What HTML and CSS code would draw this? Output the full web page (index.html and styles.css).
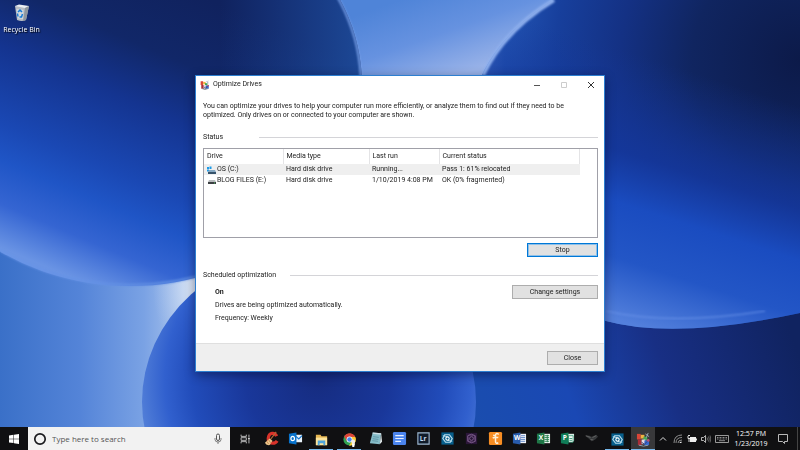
FILE: index.html
```html
<!DOCTYPE html>
<html lang="en">
<head>
<meta charset="utf-8">
<meta name="viewport" content="width=device-width, initial-scale=1">
<title>Optimize Drives</title>
<link rel="stylesheet" href="styles.css">
</head>
<body>
<svg class="wallpaper" viewBox="0 0 800 450" preserveAspectRatio="none" aria-hidden="true">
  <defs>
    <linearGradient id="sky" x1="0" y1="0" x2="1" y2="0">
      <stop offset="0" stop-color="#3a70c8"/><stop offset=".1" stop-color="#5484d8"/><stop offset=".18" stop-color="#7aa2e4"/><stop offset=".24" stop-color="#b4cbee"/><stop offset=".42" stop-color="#4a80d4"/><stop offset=".6" stop-color="#6a94e2"/><stop offset="1" stop-color="#14286b"/>
    </linearGradient>
    <linearGradient id="top" gradientUnits="userSpaceOnUse" x1="400" y1="0" x2="430" y2="85">
      <stop offset="0" stop-color="#4f84d8"/><stop offset=".5" stop-color="#6692e0"/><stop offset="1" stop-color="#98b2e8"/>
    </linearGradient>
    <radialGradient id="glow"><stop offset="0" stop-color="#e4ecf8"/><stop offset="1" stop-color="#b4cbee" stop-opacity="0"/></radialGradient>
    <linearGradient id="orbA" gradientUnits="userSpaceOnUse" x1="210" y1="0" x2="90" y2="285">
      <stop offset="0" stop-color="#10225e"/><stop offset=".22" stop-color="#112768"/><stop offset=".4" stop-color="#143490"/><stop offset=".63" stop-color="#1a48b4"/><stop offset=".74" stop-color="#1f55c6"/><stop offset=".87" stop-color="#3565d2"/><stop offset="1" stop-color="#6a94e4"/>
    </linearGradient>
    <linearGradient id="orbAEdge" gradientUnits="userSpaceOnUse" x1="220" y1="0" x2="362" y2="0">
      <stop offset="0" stop-color="#1d4da6" stop-opacity="0"/><stop offset="1" stop-color="#2052a4" stop-opacity=".8"/>
    </linearGradient>
    <linearGradient id="rimA" x1="0" y1="0" x2="1" y2="0"><stop offset="0" stop-color="#6f9aec"/><stop offset=".7" stop-color="#5c8be0"/><stop offset="1" stop-color="#7ba2ea"/></linearGradient>
    <radialGradient id="orbB" gradientUnits="userSpaceOnUse" cx="800" cy="60" r="360">
      <stop offset="0" stop-color="#0c1a49"/><stop offset=".3" stop-color="#102560"/><stop offset=".5" stop-color="#143184"/><stop offset=".68" stop-color="#173f9c"/><stop offset=".82" stop-color="#2254b4"/><stop offset=".9" stop-color="#4a7bd0"/><stop offset="1" stop-color="#6a95e2"/>
    </radialGradient>
    <linearGradient id="orbBLow" gradientUnits="userSpaceOnUse" x1="740" y1="50" x2="650" y2="330">
      <stop offset=".12" stop-color="#143596" stop-opacity="0"/><stop offset=".45" stop-color="#14379c" stop-opacity=".85"/><stop offset=".62" stop-color="#1a4cc0"/><stop offset=".8" stop-color="#2356c6"/><stop offset="1" stop-color="#5380dc"/>
    </linearGradient>
    <radialGradient id="orbC" gradientUnits="userSpaceOnUse" cx="318" cy="380" r="180">
      <stop offset="0" stop-color="#162c80"/><stop offset=".4" stop-color="#19379a"/><stop offset=".7" stop-color="#214cba"/><stop offset=".85" stop-color="#3160ce"/><stop offset="1" stop-color="#527fd8"/>
    </radialGradient>
    <linearGradient id="ground" gradientUnits="userSpaceOnUse" x1="480" y1="440" x2="790" y2="330">
      <stop offset="0" stop-color="#1a4dae"/><stop offset=".3" stop-color="#1a48b4"/><stop offset=".6" stop-color="#182f84"/><stop offset="1" stop-color="#102360"/>
    </linearGradient>
    <filter id="soft"><feGaussianBlur stdDeviation="1"/></filter>
  </defs>
  <rect width="800" height="450" fill="url(#sky)"/>
  <path d="M300 0h280v180H300z" fill="url(#top)"/>
  <ellipse cx="197" cy="288" rx="44" ry="70" fill="url(#glow)"/>
  <path d="M420 300h380v150H420z" fill="url(#ground)"/>
  <ellipse cx="130" cy="85" rx="232" ry="201" fill="url(#orbA)"/>
  <ellipse cx="130" cy="85" rx="232" ry="201" fill="url(#orbAEdge)"/>
  <ellipse cx="130" cy="85" rx="231" ry="200" fill="none" stroke="url(#rimA)" stroke-width="2" filter="url(#soft)"/>
  <path d="M553 0C520 20 496 45 482 75C440 170 470 290 606 321Q675 340 800 313V0Z" fill="url(#orbB)"/>
  <path d="M553 0C520 20 496 45 482 75C440 170 470 290 606 321Q675 340 800 313V0Z" fill="url(#orbBLow)"/>
  <path d="M554 0C521 20 497 45 483 75" fill="none" stroke="#8fb0ee" stroke-width="4" filter="url(#soft)"/>
  <path d="M606 311Q670 326 765 311" fill="none" stroke="#6c95ea" filter="url(#soft)"/>
  <ellipse cx="309" cy="402" rx="167" ry="152" fill="url(#orbC)"/>
</svg>

<main class="desktop">
  <a class="shortcut" href="#bin">
    <svg viewBox="0 0 16 18" aria-hidden="true"><path d="M1 2l2 14q5 2 9 0L15 2z" fill="#b7bdc5"/><path d="M1 2l4-1.500 10 1.500-4 2z" fill="#edf0f3"/><path d="M11 4l4-2-3 14-3 1z" fill="#8f979f"/><path d="M2.500 5l7 1-.5 9-5-.5z" fill="#d3d9df"/><path d="M4 8l2-2 2 2M8.500 10l-1 3h-2M3.500 9.500l.5 3" fill="none" stroke="#167bd6" stroke-width="1.500"/></svg>
    <span>Recycle Bin</span>
  </a>

  <section class="window" aria-labelledby="title">
    <header class="titlebar">
      <svg class="app" viewBox="0 0 16 16" aria-hidden="true"><use href="#defrag"/></svg>
      <h1 id="title">Optimize Drives</h1>
      <div class="controls">
        <button type="button" aria-label="Minimize"><svg viewBox="0 0 8 8"><path d="M1 4.500h6" stroke="#555"/></svg></button>
        <button type="button" aria-label="Maximize" disabled><svg viewBox="0 0 8 8"><path d="M1.500 1.500h5v5h-5z" fill="none" stroke="#ccc"/></svg></button>
        <button type="button" aria-label="Close window"><svg viewBox="0 0 8 8"><path d="M1 1l6 6M7 1L1 7" stroke="#333"/></svg></button>
      </div>
    </header>
    <div class="content">
      <p class="intro">You can optimize your drives to help your computer run more efficiently, or analyze them to find out if they need to be<br>optimized. Only drives on or connected to your computer are shown.</p>
      <div class="group status"><h2>Status</h2><i></i></div>
      <div class="list">
        <table>
          <colgroup><col class="c1"><col class="c2"><col class="c3"><col class="c4"></colgroup>
          <thead><tr><th>Drive</th><th>Media type</th><th>Last run</th><th>Current status</th></tr></thead>
          <tbody>
            <tr class="selected"><td><span class="drive"><svg viewBox="0 0 9 8" aria-hidden="true"><path d="M0 1h2v2H0zM2.500.5h2V3h-2zM0 3.500h2v2H0z" fill="#1d9be8"/><path d="M2 4h6l1 2H1z" fill="#86a8c2"/><path d="M1 6h8v2H1z" fill="#36536b"/></svg>OS (C:)</span></td><td>Hard disk drive</td><td>Running...</td><td>Pass 1: 61% relocated</td></tr>
            <tr><td><span class="drive"><svg viewBox="0 0 9 8" aria-hidden="true"><path d="M2 3h6l1 2H1z" fill="#b9bcbf"/><path d="M1 5h8v2H1z" fill="#3c4043"/><path d="M7 5.500h1v1H7z" fill="#54c06a"/></svg>BLOG FILES (E:)</span></td><td>Hard disk drive</td><td>1/10/2019 4:08 PM</td><td>OK (0% fragmented)</td></tr>
          </tbody>
        </table>
      </div>
      <div class="actions"><button class="push stop" type="button">Stop</button></div>
      <div class="group scheduled"><h2>Scheduled optimization</h2><i></i></div>
      <div class="schedule">
        <div><strong>On</strong><p>Drives are being optimized automatically.</p><p>Frequency: Weekly</p></div>
        <button class="push wide" type="button">Change settings</button>
      </div>
    </div>
    <footer><button class="push small" type="button">Close</button></footer>
  </section>
</main>

<nav class="taskbar" aria-label="Taskbar">
  <button class="start" type="button" aria-label="Start"><svg viewBox="0 0 10 10"><path d="M0 1.500l4.500-.7v3.900H0zM5 .7L10 0v4.700H5zM0 5.200h4.500v3.900L0 8.500zM5 5.200h5V10l-5-.7z" fill="#fff"/></svg></button>
  <label class="search">
    <svg class="ring" viewBox="0 0 14 14" aria-hidden="true"><circle cx="7" cy="7" r="5.200" fill="none" stroke="#1b1b1f" stroke-width="1.700"/></svg>
    <input type="text" placeholder="Type here to search" aria-label="Type here to search">
    <svg class="mic" viewBox="0 0 8 12" aria-hidden="true"><rect x="2.500" y="1" width="3" height="6.500" rx="1.500" fill="none" stroke="#555"/><path d="M1 5v1.500Q1 9 4 9t3-2.500V5M4 9v2" fill="none" stroke="#666" stroke-width=".8"/></svg>
  </label>
  <div class="apps">
    <button class="taskview" type="button" aria-label="Task View"><svg viewBox="0 0 16 16"><path d="M3.500 3v2h6V3M3.500 13v-2h6v2M3.500 6.500h6v3h-6zM12.500 3v3M12.500 9v4" fill="none" stroke="#ccc"/><path d="M11.500 6.500h2v2h-2z" fill="#ddd"/></svg></button>
    <button type="button" aria-label="CCleaner"><svg viewBox="0 0 16 16"><path d="M13.500 5.500Q12 2 8.500 2.500T4.500 8t5 5q3 0 4.500-2.500" fill="none" stroke="#d8322a" stroke-width="3.400"/><path d="M13 1L7 9" stroke="#b06838" stroke-width="1.200"/><path d="M6 8l3 2.500-3 4.500q-4 .5-5-2.500z" fill="#edc68c"/><path d="M3 11l2 3M5 9.500l2 3" stroke="#b87942" stroke-width=".8"/></svg></button>
    <button type="button" aria-label="Outlook"><svg viewBox="0 0 16 16"><path d="M7 4h8v8H7z" fill="#e8f2fb"/><path d="M7.500 5l4 3.500L15 5" fill="none" stroke="#1474cc" stroke-width="1.200"/><path d="M1 3l8-1.500v13L1 13z" fill="#0872cb"/><ellipse cx="5" cy="8" rx="1.900" ry="2.300" fill="none" stroke="#fff" stroke-width="1.300"/></svg></button>
    <button class="open" type="button" aria-label="File Explorer"><svg viewBox="0 0 16 16"><path d="M2 3h5l1 1.500h6V14H2z" fill="#e6b652"/><path d="M2 6h12v8H2z" fill="#fbe39c"/><path d="M4 9h8v5h-2v-2H6v2H4z" fill="#4da4dc"/></svg></button>
    <button class="open" type="button" aria-label="Chrome"><svg viewBox="0 0 16 16"><circle cx="8" cy="8" r="6.500" fill="#30a352"/><path d="M2.400 4.800A6.500 6.500 0 0114.500 7.500H8L5 9.500z" fill="#dc4437"/><path d="M8 5h6a6.500 6.500 0 01-6.500 9.500L11 9z" fill="#fbc934"/><path d="M2.400 4.800A6.500 6.500 0 0113.700 5H8z" fill="#dc4437"/><circle cx="8" cy="8" r="3.100" fill="#fff"/><circle cx="8" cy="8" r="2.400" fill="#4588ef"/><circle cx="12" cy="10" r="2" fill="#f2ede8"/><path d="M10.500 12h3.500l-1 4h-2z" fill="#fff"/></svg></button>
    <button type="button" aria-label="Notepad"><svg viewBox="0 0 16 16"><path d="M5 1.500l9 1-1.500 11.500-10.500-1z" fill="#86bcc8"/><path d="M14 2.500l1 9-2.500 2.500z" fill="#dfe8ea"/><path d="M5 1.500l9 1v1.500l-9-1z" fill="#cfdfe4"/><path d="M5.500 6l6 .8M5 8.200l6 .8M4.500 10.300l6 .7" stroke="#578e9c" stroke-width=".8"/></svg></button>
    <button type="button" aria-label="Docs"><svg viewBox="0 0 16 16"><rect x="1" y="1" width="14" height="14" rx="1.500" fill="#4b84ed"/><path d="M3.500 5h9M3.500 8h9M3.500 11h6" stroke="#e8f0ff" stroke-width="1.300"/></svg></button>
    <button type="button" aria-label="Lightroom"><svg viewBox="0 0 16 16"><path d="M2 2h12v12H2z" fill="#101c2b" stroke="#9fb9d2" stroke-width="1.200"/><text x="4" y="11" class="glyph lr">Lr</text></svg></button>
    <button type="button" aria-label="Photo Organizer"><svg viewBox="0 0 16 16"><use href="#organizer"/></svg></button>
    <button type="button" aria-label="Photo Editor"><svg viewBox="0 0 16 16"><path d="M2 2h12v12H2z" fill="#2a1638"/><path d="M4 5q4-3 8 0v6q-4 3-8 0z" fill="none" stroke="#80618f"/><circle cx="8" cy="8" r="2" fill="none" stroke="#80618f"/><path d="M5 4l6 1 1 6M4 6l1 5 5 1" fill="none" stroke="#6c4c7d" stroke-width=".8"/></svg></button>
    <button type="button" aria-label="Fritzing"><svg viewBox="0 0 16 16"><rect x="1" y="1" width="14" height="14" rx="1.500" fill="#f78d23"/><path d="M11.500 3.500q-3.500-2-3.500 1.500v6q0 3 3 1.500M5 7.500q3-1.500 6-.5M5.500 4.500L8 5" fill="none" stroke="#fff0d8" stroke-width="1.600"/></svg></button>
    <button type="button" aria-label="Word"><svg viewBox="0 0 16 16"><path d="M8 3h7v10H8z" fill="#f0f4fb"/><path d="M9 5h5M9 7h5M9 9h5M9 11h5" stroke="#3b69b8" stroke-width=".8"/><path d="M1 3l8-1.500v13L1 13z" fill="#285bac"/><text x="2" y="10" class="glyph">W</text></svg></button>
    <button type="button" aria-label="Excel"><svg viewBox="0 0 16 16"><path d="M8 3h7v10H8z" fill="#e7f3ec"/><path d="M9 5h5M9 7h5M9 9h5M9 11h5M12 4v8" stroke="#1f7a48" stroke-width=".9"/><path d="M1 3l8-1.500v13L1 13z" fill="#1f7747"/><text x="3" y="10" class="glyph">X</text></svg></button>
    <button type="button" aria-label="Publisher"><svg viewBox="0 0 16 16"><path d="M8 3h7v8H8z" fill="#dbefe7"/><path d="M9 5h5v7H9z" fill="#f2f7f5" stroke="#15865f" stroke-width=".7"/><path d="M10 8h3M10 10h3" stroke="#15865f" stroke-width=".8"/><path d="M1 3l8-1.500v13L1 13z" fill="#107c58"/><text x="3" y="10" class="glyph">P</text></svg></button>
    <button type="button" aria-label="Inkscape"><svg viewBox="0 0 16 16"><path d="M1 5q4-1 7 1l5-2 2 2-3 3-4 2-3-3z" fill="#37393b"/><path d="M2 5l5 2M9 7l4-2M7 9l3 .5" stroke="#6d6d6d" stroke-width=".8"/></svg></button>
    <button class="open" type="button" aria-label="Organizer"><svg viewBox="0 0 16 16"><use href="#organizer"/></svg></button>
    <button class="open active" type="button" aria-label="Optimize Drives"><svg viewBox="0 0 16 16">
      <defs>
        <g id="defrag"><path d="M1 2h4v6H1z" fill="#d94537"/><path d="M5 3h4v4H5z" fill="#f2b342"/><path d="M8 5h4v4H8z" fill="#45a857"/><path d="M2 8h4v6H2z" fill="#a92e38"/><path d="M6 8h4v5H6z" fill="#e7dbe2"/><path d="M9 9h5v5H9z" fill="#3467cf"/><path d="M10 2l4 3M13 1l-2 5M3 14l5 1 5-1" stroke="#9ba6b8"/><circle cx="13" cy="9" r="1.500" fill="#b75277"/><path d="M6 11l3 2 3-3" fill="none" stroke="#333d72"/></g>
        <g id="organizer"><path d="M1.500 1.500h13v13h-13z" fill="#075f8c"/><path d="M5 4h5l3 4-2 4H6L3 8z" fill="none" stroke="#b6dced" stroke-width="1.300"/><path d="M3 5l5 1M13 11l-5-1" stroke="#b6dced"/><circle cx="8" cy="8" r="1.800" fill="none" stroke="#fff" stroke-width="1.200"/></g>
      </defs><use href="#defrag"/></svg></button>
  </div>
  <div class="tray">
    <button class="t1" type="button" aria-label="Show hidden icons"><svg viewBox="0 0 8 8"><path d="M1 5.500l3-3 3 3" fill="none" stroke="#ddd"/></svg></button>
    <button class="t2" type="button" aria-label="Network"><svg viewBox="0 0 10 10"><path d="M1 9Q1 1 9 1M3 9Q3 3.500 9 3.500M5 9Q5 6 9 6" fill="none" stroke="#999" stroke-width=".9"/><path d="M6.500 9q0-1.500 2-1.500V9z" fill="#eee"/></svg></button>
    <button class="t2" type="button" aria-label="Battery"><svg viewBox="0 0 10 10"><path d="M3 3h6v5H3z" fill="#eee"/><path d="M9.500 4.500v2M1 2v2.500h2M2 5v3M1 1.500h2" fill="none" stroke="#ddd"/></svg></button>
    <button class="t2" type="button" aria-label="Volume"><svg viewBox="0 0 10 10"><path d="M.5 3.500h2l2-2v7l-2-2h-2z" fill="none" stroke="#ddd" stroke-width=".8"/><path d="M6 3.500q1 1.500 0 3M7.500 2.500q1.500 2.500 0 5M9 1.500q1.500 3.500 0 7" fill="none" stroke="#888" stroke-width=".7"/></svg></button>
    <button class="t3" type="button" aria-label="Touch keyboard"><svg viewBox="0 0 14 8"><path d="M.5.5h13v7H.5z" fill="none" stroke="#bbb" stroke-width=".8"/><path d="M2 2.500h10M2 4h10" stroke="#aaa" stroke-width=".8" stroke-dasharray="1 .5"/><path d="M4 5.700h6" stroke="#aaa" stroke-width=".8"/></svg></button>
    <time class="clock" datetime="2019-01-23T12:57">12:57 PM<br>1/23/2019</time>
    <button class="t4" type="button" aria-label="Notifications"><svg viewBox="0 0 12 12"><path d="M1.500 1.500h9v7H7.500v2l-2-2h-4z" fill="none" stroke="#ccc" stroke-width=".9"/></svg></button>
  </div>
</nav>
</body>
</html>
```

FILE: styles.css
```css
* { box-sizing: border-box; margin: 0; }
body {
  display: flex;
  flex-direction: column;
  min-height: 100vh;
  font: 7px/9px "Open Sans", "Noto Sans", sans-serif;
  color: #222;
  background: #1a48b4;
}
button, input { font: inherit; color: inherit; border: 0; padding: 0; background: none; }
svg { display: block; }
.wallpaper { position: fixed; inset: 0; width: 100%; height: 100%; z-index: -1; }

.desktop { position: relative; flex: 1; padding: 75px 16px 0; }
.shortcut {
  position: absolute; left: 0; top: 4px; width: 43px;
  display: flex; flex-direction: column; align-items: center; gap: 3px;
  color: #fff; text-decoration: none; white-space: nowrap; text-shadow: 1px 1px 1px #000;
}
.shortcut svg { width: 16px; height: 18px; }

.window {
  max-width: 410px; margin: 0 auto; background: #fff;
  font-family: Roboto, "Open Sans", sans-serif;
  border: 1px solid #2d7fd0;
  box-shadow: 0 3px 10px rgba(0, 0, 30, .45);
}
.titlebar { display: flex; align-items: center; height: 17px; padding-left: 4px; }
.titlebar .app { width: 10px; height: 10px; margin-right: 3px; }
h1, h2 { font: inherit; }
.controls { display: flex; margin-left: auto; }
.controls button { display: grid; place-items: center; width: 27px; height: 17px; }
.controls svg { width: 8px; height: 8px; }
.content { padding: 9px 6px 20px 7px; }
.group { display: flex; align-items: center; }
.group i { flex: 1; height: 1px; background: #d4d4d8; }
.status { margin-top: 13px; }
.status h2 { width: 56px; }
.scheduled { margin-top: 14px; }
.scheduled h2 { width: 87px; }

.list { height: 90px; margin-top: 6px; border: 1px solid #a0a0a8; }
table { table-layout: fixed; width: 376px; max-width: 100%; border-collapse: collapse; }
.c1 { width: 79px; } .c2 { width: 86px; } .c3 { width: 70px; }
th, td { padding: 0 0 0 3px; text-align: left; font-weight: 400; white-space: nowrap; }
th { height: 15px; border-right: 1px solid #e4e4e6; }
td { height: 11px; }
.selected { background: #efefef; }
.drive { display: flex; align-items: center; gap: 1px; }
.drive svg { width: 9px; height: 8px; }

.actions { display: flex; justify-content: flex-end; margin-top: 5px; }
.push { height: 14px; background: #e1e1e1; border: 1px solid #adadad; text-align: center; line-height: 11px; }
.stop { width: 71px; border: 1px solid #0078d7; outline: 1px solid #8fc0e8; outline-offset: -2px; }
.wide { width: 86px; }
.small { width: 51px; }
.schedule { display: flex; justify-content: space-between; align-items: flex-start; padding: 5px 0 0 12px; }
.schedule div { padding-top: 3px; }
.schedule strong { display: block; }
.schedule p { margin-top: 4px; }
footer { display: flex; justify-content: flex-end; padding: 7px 6px 6px; background: #efefef; border-top: 1px solid #dfdfdf; }

.taskbar { display: flex; height: 23px; background: #101012; color: #fff; }
.taskbar button { display: grid; place-items: center; flex: none; height: 23px; }
.taskbar .start { width: 28px; }
.start svg { width: 10px; height: 10px; }
.search { display: flex; align-items: center; flex: 0 1 202px; padding: 0 8px 0 5px; background: #f2f2f2; color: #555; }
.ring { width: 14px; height: 14px; margin-right: 5px; }
.search input { flex: 1; min-width: 0; font-size: 8px; line-height: 12px; outline: 0; }
.search input::placeholder { color: #555; opacity: 1; }
.mic { width: 8px; height: 12px; }
.apps { display: flex; flex: 1; }
.taskbar .apps button { flex: 1; border-bottom: 2px solid transparent; border-top: 2px solid transparent; }
.taskbar .apps .taskview { flex: none; width: 29px; }
.apps svg { width: 15px; height: 15px; }
.apps .taskview svg { width: 14px; height: 14px; }
.taskbar .apps .open { border-bottom: 1px solid #76b9ed; margin: 0 2px; }
.taskbar .apps .active { background: #38383a; margin: 0; }
.glyph { font: bold 7px "Open Sans", sans-serif; fill: #fff; }
.lr { fill: #c4dcf2; }
.tray { display: flex; align-items: center; padding-right: 2px; border-right: 1px solid #444; margin-right: 2px; }
.t1 { width: 16px; } .t1 svg { width: 8px; height: 8px; }
.t2 { width: 14px; } .t2 svg { width: 10px; height: 10px; }
.t3 { width: 18px; } .t3 svg { width: 14px; height: 8px; }
.t4 { width: 24px; } .t4 svg { width: 12px; height: 12px; }
.clock { width: 40px; text-align: center; line-height: 10px; white-space: nowrap; }
```
